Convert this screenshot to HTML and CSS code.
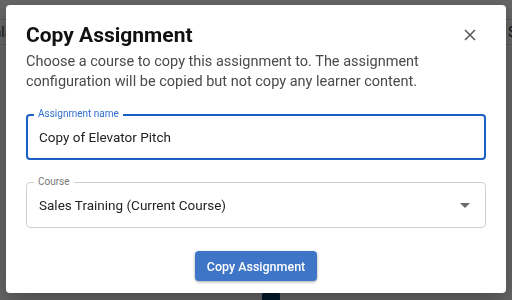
FILE: index.html
```html
<!DOCTYPE html>
<html lang="en">
<head>
    <meta charset="UTF-8">
    <meta name="viewport" content="width=device-width, initial-scale=1.0">
    <title>Copy Assignment</title>
    <link rel="stylesheet" href="styles.css">
</head>
<body>

<div class="page">
    <div class="page-row">
        <span class="cut-left">Scala</span>
        <span class="cut-right">Status</span>
    </div>
    <div class="page-logo"></div>
</div>

<div class="backdrop">
    <div class="dialog">
        <div class="dialog-head">
            <h1>Copy Assignment</h1>
            <button class="close" aria-label="Close">
                <svg width="12" height="12" viewBox="0 0 12 12">
                    <path d="M1 1L11 11M11 1L1 11" stroke="#555" stroke-width="1.5" fill="none"/>
                </svg>
            </button>
        </div>
        <p class="intro">Choose a course to copy this assignment to. The assignment configuration will be copied but not copy any learner content.</p>

        <div class="field focused">
            <span class="field-label">Assignment name</span>
            <span class="field-value">Copy of Elevator Pitch</span>
        </div>

        <div class="field">
            <span class="field-label">Course</span>
            <span class="field-value">Sales Training (Current Course)</span>
            <svg class="caret" width="10" height="5" viewBox="0 0 10 5">
                <path d="M0 0H10L5 5Z" fill="#6b6b6b"/>
            </svg>
        </div>

        <div class="actions">
            <button class="primary">Copy Assignment</button>
        </div>
    </div>
</div>

</body>
</html>
```

FILE: styles.css
```css
body {
    margin: 0;
    font-family: Roboto, "Liberation Sans", sans-serif;
    background-color: #ffffff;
    overflow: hidden;
}
.page {
    height: 300px;
    position: relative;
    overflow: hidden;
}
.page-row {
    display: flex;
    justify-content: space-between;
    margin-top: 19px;
    height: 24px;
    border-top: 1px solid #e0e0e0;
    border-bottom: 1px solid #e0e0e0;
    align-items: center;
    font-size: 14px;
    color: #333;
}
.cut-left {
    margin-left: -22px;
}
.cut-right {
    margin-right: -36px;
}
.page-logo {
    position: absolute;
    left: 262px;
    top: 292px;
    width: 18px;
    height: 10px;
    background-color: #0d3b66;
    border-radius: 3px 3px 0 0;
}
.backdrop {
    position: fixed;
    inset: 0;
    background-color: rgba(0, 0, 0, 0.6);
}
.dialog {
    position: absolute;
    left: 6px;
    top: 5px;
    width: 500px;
    height: 288px;
    box-sizing: border-box;
    background-color: #ffffff;
    border-radius: 4px;
    padding: 14px 20px 12px 20px;
    box-shadow: 0 8px 24px rgba(0, 0, 0, 0.3);
}
.dialog-head {
    display: flex;
    justify-content: space-between;
    align-items: center;
    height: 32px;
}
h1 {
    margin: 0;
    font-size: 21px;
    font-weight: 700;
    line-height: 32px;
    color: #111;
}
.close {
    border: none;
    background: none;
    padding: 0;
    width: 12px;
    height: 12px;
    margin-right: 10px;
    cursor: pointer;
}
.close svg {
    display: block;
}
.intro {
    margin: 1px 0 0 0;
    font-size: 14.5px;
    line-height: 20px;
    color: #4a4a4a;
}
.field {
    position: relative;
    display: flex;
    align-items: center;
    height: 46px;
    box-sizing: border-box;
    margin-top: 22px;
    padding: 0 12px;
    border: 1px solid #cfcfcf;
    border-radius: 4px;
}
.field.focused {
    border: 2px solid #1a5fc4;
    padding: 0 11px;
}
.field-label {
    position: absolute;
    left: 7px;
    top: -8px;
    padding: 0 4px;
    background-color: #ffffff;
    font-size: 10px;
    line-height: 14px;
    color: #777;
}
.field.focused .field-label {
    left: 6px;
    top: -9px;
    color: #2f6fcc;
}
.field-value {
    flex: 1;
    font-size: 13.5px;
    color: #222;
}
.caret {
    margin-right: 3px;
}
.actions {
    display: flex;
    justify-content: center;
    margin-top: 23px;
}
.primary {
    width: 122px;
    height: 30px;
    border: none;
    border-radius: 4px;
    background-color: #3e75c6;
    color: #ffffff;
    font-family: Roboto, "Liberation Sans", sans-serif;
    font-size: 12.5px;
    font-weight: 500;
    box-shadow: 0 1px 3px rgba(0, 0, 0, 0.35);
    cursor: pointer;
}
```
